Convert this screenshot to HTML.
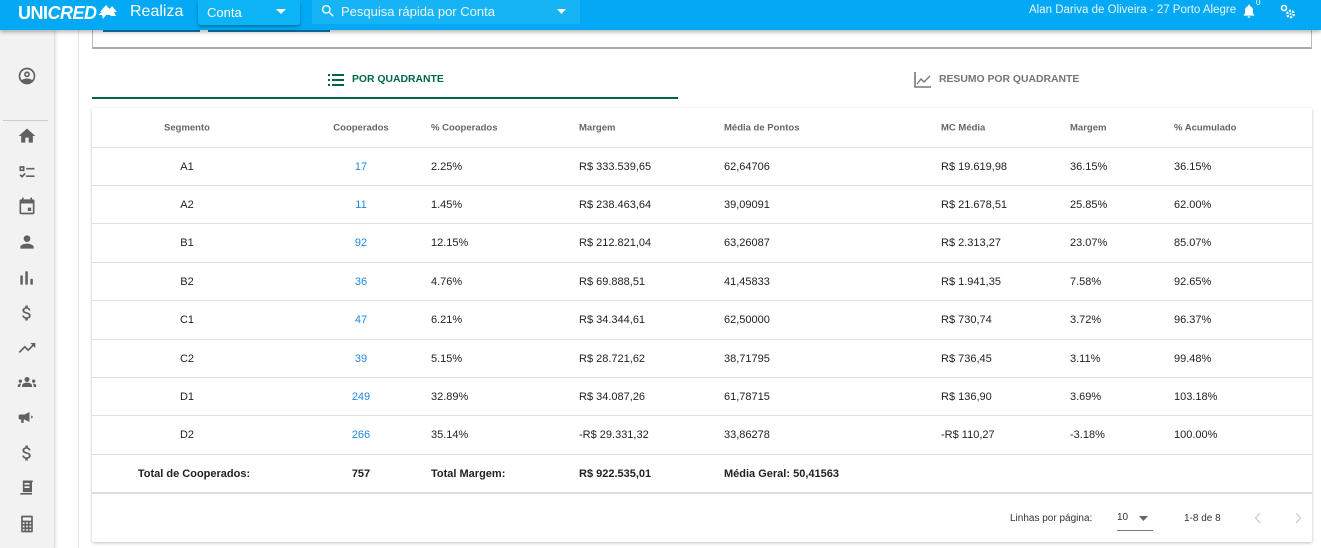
<!DOCTYPE html>
<html><head><meta charset="utf-8"><style>
*{margin:0;padding:0;box-sizing:border-box}
body{width:1321px;height:548px;overflow:hidden;background:#fff;font-family:"Liberation Sans",sans-serif;position:relative;color:#222}
.a{position:absolute}
.hdr{left:0;top:0;width:1321px;height:30px;background:#03a9f4;box-shadow:0 2px 4px rgba(0,0,0,.3);z-index:5}
.side{left:0;top:30px;width:55px;height:518px;background:#f2f2f2;border-right:1px solid #e0e0e0;box-shadow:1px 0 3px rgba(0,0,0,.12)}
.row{position:absolute;left:92px;width:1220px;border-bottom:1px solid #e0e0e0;font-size:11px;color:#222}
.row span{position:absolute;top:50%;transform:translateY(-50%);white-space:nowrap}
.c1{left:45px;width:100px;text-align:center}
.c2{left:229px;width:80px;text-align:center}
.c3{left:339px}.c4{left:487px}.c5{left:632px}.c6{left:849px}.c7{left:978px}.c8{left:1082px}
.h{font-size:9.5px;color:#666;font-weight:bold}
.b{font-weight:bold}
.blue{color:#1e88e5}
.ic{position:absolute;left:17px;width:20px;height:20px;fill:#616161}
</style></head><body>
<div class="a hdr">
 <div class="a" style="left:18px;top:3px;color:#fff;font-size:18px;font-weight:bold;letter-spacing:-0.5px">UNI<i>CRED</i></div>
 <svg class="a" style="left:96px;top:4px" width="22" height="16" viewBox="0 0 22 16"><path d="M4 8L10 1L16 8H12L14 11H10L7 15L6 11H2L6 8Z M11 8L16 2L21 8H18L20 12H15Z" fill="#fff"/></svg>
 <div class="a" style="left:130px;top:3px;color:#fff;font-size:16px">Realiza</div>
 <div class="a" style="left:198px;top:0;width:102px;height:25px;background:#0cb4f6;box-shadow:0 2px 3px rgba(0,0,0,.3);border-radius:0 0 3px 3px"><span class="a" style="left:9px;top:5px;color:#fff;font-size:13px">Conta</span><svg class="a" style="left:78px;top:9px" width="10" height="6"><path d="M0 0H10L5 5Z" fill="#fff"/></svg></div>
 <div class="a" style="left:312px;top:0;width:268px;height:24px;background:#16b4f5">
  <svg class="a" style="left:8px;top:3px" width="16" height="16" viewBox="0 0 24 24"><path d="M15.5 14h-.8l-.3-.3A6.5 6.5 0 1 0 9.5 16a6.5 6.5 0 0 0 4.2-1.6l.3.3v.8l5 5 1.5-1.5-5-5zm-6 0a4.5 4.5 0 1 1 0-9 4.5 4.5 0 0 1 0 9z" fill="#fff"/></svg>
  <span class="a" style="left:29px;top:4px;color:#e8f6fe;font-size:13px">Pesquisa rápida por Conta</span>
  <svg class="a" style="left:245px;top:9px" width="9" height="6"><path d="M0 0H9L4.5 5Z" fill="#fff"/></svg>
 </div>
 <div class="a" style="left:1029px;top:4px;color:#e8f6fe;font-size:11.5px">Alan Dariva de Oliveira - 27 Porto Alegre</div>
 <svg class="a" style="left:1241px;top:2px" width="16" height="18" viewBox="0 0 24 24"><path d="M12 22a2 2 0 0 0 2-2h-4a2 2 0 0 0 2 2zm6-6v-5c0-3-1.6-5.6-4.5-6.3V4a1.5 1.5 0 0 0-3 0v.7C7.6 5.4 6 8 6 11v5l-2 2v1h16v-1z" fill="#fff"/></svg>
 <div class="a" style="left:1256px;top:-2px;color:#fff;font-size:8px">0</div>
 <svg class="a" style="left:1280px;top:4px" width="16" height="16" viewBox="0 0 16 16"><circle cx="4" cy="4" r="2.5" fill="none" stroke="#fff" stroke-width="1.6"/><circle cx="10.5" cy="10" r="3.2" fill="none" stroke="#fff" stroke-width="2.4" stroke-dasharray="2 1.3"/><circle cx="10.5" cy="10" r="1" fill="#fff"/></svg>
</div>
<div class="a side">
 <svg class="ic" style="top:36px" viewBox="0 0 24 24"><path d="M12 2a10 10 0 1 0 0 20 10 10 0 0 0 0-20zm0 2a8 8 0 0 1 6.2 13c-1.5-1.4-3.8-2-6.2-2s-4.7.6-6.2 2A8 8 0 0 1 12 4zm0 2.5a3.5 3.5 0 1 0 0 7 3.5 3.5 0 0 0 0-7zm0 2a1.5 1.5 0 1 1 0 3 1.5 1.5 0 0 1 0-3z"/></svg>
 <div class="a" style="left:3px;top:90px;width:45px;height:1px;background:#ccc"></div>
 <svg class="ic" style="top:96px" viewBox="0 0 24 24"><path d="M10 20v-6h4v6h5v-8h3L12 3 2 12h3v8z"/></svg>
 <svg class="ic" style="top:132px" viewBox="0 0 24 24"><path d="M3 5h6v6H3zm2 2v2h2V7zm6 0h10v2H11zM3 16l1.5-1.5L6 16l3-3 1.5 1.5L6 19zm8 0h10v2H11z"/></svg>
 <svg class="ic" style="top:166px" viewBox="0 0 24 24"><path d="M19 4h-1V2h-2v2H8V2H6v2H5a2 2 0 0 0-2 2v14a2 2 0 0 0 2 2h14a2 2 0 0 0 2-2V6a2 2 0 0 0-2-2zm0 16H5V9h14zm-6-6h4v4h-4z"/></svg>
 <svg class="ic" style="top:202px" viewBox="0 0 24 24"><path d="M12 12a4 4 0 1 0 0-8 4 4 0 0 0 0 8zm0 2c-2.7 0-8 1.3-8 4v2h16v-2c0-2.7-5.3-4-8-4z"/></svg>
 <svg class="ic" style="top:238px" viewBox="0 0 24 24"><path d="M4 9h3v11H4zm6-5h3v16h-3zm6 9h3v7h-3z"/></svg>
 <svg class="ic" style="top:273px" viewBox="0 0 24 24"><path d="M11.8 10.9c-2.3-.6-3-1.2-3-2.1 0-1.1 1-1.9 2.7-1.9 1.8 0 2.4.8 2.5 2.1h2.2c-.1-1.7-1.1-3.3-3.2-3.8V3h-3v2.2C8.1 5.6 6.5 6.8 6.5 8.8c0 2.3 1.9 3.4 4.7 4.1 2.5.6 3 1.5 3 2.4 0 .7-.5 1.8-2.7 1.8-2.1 0-2.9-.9-3-2.1H6.3c.1 2.2 1.8 3.5 3.7 3.9V21h3v-2.2c1.9-.4 3.5-1.5 3.5-3.5 0-2.8-2.4-3.8-4.7-4.4z"/></svg>
 <svg class="ic" style="top:308px" viewBox="0 0 24 24"><path d="M16 6l2.3 2.3-4.9 4.9-4-4L2 16.6 3.4 18l6-6 4 4 6.3-6.3L22 12V6z"/></svg>
 <svg class="ic" style="top:342px" viewBox="0 0 24 24"><path d="M12 12.8c1.6 0 3.1.4 4.3 1 1.1.5 1.7 1.5 1.7 2.7V18H6v-1.5c0-1.2.6-2.2 1.7-2.7 1.2-.6 2.7-1 4.3-1zM4 13a2 2 0 1 0 0-4 2 2 0 0 0 0 4zm-3 5v-1.5C1 15 2.3 14 4 14c.4 0 .7 0 1 .1-.6.8-1 1.7-1 2.4V18zm19-5a2 2 0 1 0 0-4 2 2 0 0 0 0 4zm3 5h-3v-1.5c0-.7-.4-1.6-1-2.4.3-.1.6-.1 1-.1 1.7 0 3 1 3 2.5zM12 6a3 3 0 1 1 0 6 3 3 0 0 1 0-6z"/></svg>
 <svg class="ic" style="top:377px" viewBox="0 0 24 24"><path d="M4 9a2 2 0 0 0-2 2v2a2 2 0 0 0 2 2h1v4h3v-4h1l6 3V6L9 9zm13 1v4c1-.5 2-1.2 2-2s-1-1.5-2-2z"/></svg>
 <svg class="ic" style="top:413px" viewBox="0 0 24 24"><path d="M11.8 10.9c-2.3-.6-3-1.2-3-2.1 0-1.1 1-1.9 2.7-1.9 1.8 0 2.4.8 2.5 2.1h2.2c-.1-1.7-1.1-3.3-3.2-3.8V3h-3v2.2C8.1 5.6 6.5 6.8 6.5 8.8c0 2.3 1.9 3.4 4.7 4.1 2.5.6 3 1.5 3 2.4 0 .7-.5 1.8-2.7 1.8-2.1 0-2.9-.9-3-2.1H6.3c.1 2.2 1.8 3.5 3.7 3.9V21h3v-2.2c1.9-.4 3.5-1.5 3.5-3.5 0-2.8-2.4-3.8-4.7-4.4z"/></svg>
 <svg class="ic" style="top:448px" viewBox="0 0 24 24"><path d="M7 3h12v2h-1v12H7zm2 3v2h6V6zm0 4v2h6v-2zM4 18h14v2H4z"/></svg>
 <svg class="ic" style="top:484px" viewBox="0 0 24 24"><path d="M6 2h12a1 1 0 0 1 1 1v18a1 1 0 0 1-1 1H6a1 1 0 0 1-1-1V3a1 1 0 0 1 1-1zm1 2v4h10V4zm0 6v2h2v-2zm4 0v2h2v-2zm4 0v2h2v-2zM7 14v2h2v-2zm4 0v2h2v-2zm4 0v2h2v-2zM7 18v2h2v-2zm4 0v2h2v-2zm4 0v2h2v-2z"/></svg>
</div>
<div class="a" style="left:78px;top:30px;width:1px;height:518px;background:#e6e6e6"></div>
<div class="a" style="left:103px;top:30px;width:97px;height:2px;background:#0a7fb5"></div>
<div class="a" style="left:208px;top:30px;width:122px;height:2px;background:#0a7fb5"></div>
<div class="a" style="left:92px;top:30px;width:1220px;height:19px;border:1px solid #bbb;border-top:none;border-bottom:2px solid #aaa"></div>
<svg class="a" style="left:328px;top:73px" width="16" height="14" viewBox="0 0 16 14"><g fill="#00664a"><rect x="0" y="1" width="2" height="2"/><rect x="0" y="6" width="2" height="2"/><rect x="0" y="11" width="2" height="2"/><rect x="4" y="1" width="12" height="2"/><rect x="4" y="6" width="12" height="2"/><rect x="4" y="11" width="12" height="2"/></g></svg>
<div class="a" style="left:352px;top:74px;font-size:10.4px;font-weight:bold;color:#00664a">POR QUADRANTE</div>
<div class="a" style="left:92px;top:97px;width:586px;height:2px;background:#00664a"></div>
<svg class="a" style="left:914px;top:72px" width="18" height="16" viewBox="0 0 18 16"><path d="M1 0V15H17" fill="none" stroke="#777" stroke-width="1.6"/><path d="M3 12L7 7L10 10L16 4" fill="none" stroke="#777" stroke-width="1.4"/></svg>
<div class="a" style="left:939px;top:74px;font-size:10.4px;font-weight:bold;color:#757575">RESUMO POR QUADRANTE</div>
<div class="a" style="left:92px;top:108px;width:1220px;height:434px;box-shadow:0 1px 3px rgba(0,0,0,.25);border-radius:2px"></div>
<div class="row" style="top:108px;height:40px"><span class="c1 h">Segmento</span><span class="c2 h">Cooperados</span><span class="c3 h">% Cooperados</span><span class="c4 h">Margem</span><span class="c5 h">Média de Pontos</span><span class="c6 h">MC Média</span><span class="c7 h">Margem</span><span class="c8 h">% Acumulado</span></div>
<div class="row" style="top:148px;height:38px"><span class="c1">A1</span><span class="c2 blue">17</span><span class="c3">2.25%</span><span class="c4">R$ 333.539,65</span><span class="c5">62,64706</span><span class="c6">R$ 19.619,98</span><span class="c7">36.15%</span><span class="c8">36.15%</span></div>
<div class="row" style="top:186px;height:38px"><span class="c1">A2</span><span class="c2 blue">11</span><span class="c3">1.45%</span><span class="c4">R$ 238.463,64</span><span class="c5">39,09091</span><span class="c6">R$ 21.678,51</span><span class="c7">25.85%</span><span class="c8">62.00%</span></div>
<div class="row" style="top:224px;height:39px"><span class="c1">B1</span><span class="c2 blue">92</span><span class="c3">12.15%</span><span class="c4">R$ 212.821,04</span><span class="c5">63,26087</span><span class="c6">R$ 2.313,27</span><span class="c7">23.07%</span><span class="c8">85.07%</span></div>
<div class="row" style="top:263px;height:38px"><span class="c1">B2</span><span class="c2 blue">36</span><span class="c3">4.76%</span><span class="c4">R$ 69.888,51</span><span class="c5">41,45833</span><span class="c6">R$ 1.941,35</span><span class="c7">7.58%</span><span class="c8">92.65%</span></div>
<div class="row" style="top:301px;height:39px"><span class="c1">C1</span><span class="c2 blue">47</span><span class="c3">6.21%</span><span class="c4">R$ 34.344,61</span><span class="c5">62,50000</span><span class="c6">R$ 730,74</span><span class="c7">3.72%</span><span class="c8">96.37%</span></div>
<div class="row" style="top:340px;height:38px"><span class="c1">C2</span><span class="c2 blue">39</span><span class="c3">5.15%</span><span class="c4">R$ 28.721,62</span><span class="c5">38,71795</span><span class="c6">R$ 736,45</span><span class="c7">3.11%</span><span class="c8">99.48%</span></div>
<div class="row" style="top:378px;height:38px"><span class="c1">D1</span><span class="c2 blue">249</span><span class="c3">32.89%</span><span class="c4">R$ 34.087,26</span><span class="c5">61,78715</span><span class="c6">R$ 136,90</span><span class="c7">3.69%</span><span class="c8">103.18%</span></div>
<div class="row" style="top:416px;height:39px"><span class="c1">D2</span><span class="c2 blue">266</span><span class="c3">35.14%</span><span class="c4">-R$ 29.331,32</span><span class="c5">33,86278</span><span class="c6">-R$ 110,27</span><span class="c7">-3.18%</span><span class="c8">100.00%</span></div>
<div class="row b" style="top:455px;height:39px;border-bottom:2px solid #ddd"><span class="c1 b" style="left:25px;width:154px">Total de Cooperados:</span><span class="c2 b">757</span><span class="c3 b">Total Margem:</span><span class="c4 b">R$ 922.535,01</span><span class="c5 b">Média Geral: 50,41563</span></div>
<div class="a" style="left:1010px;top:513px;font-size:10px;color:#333">Linhas por página:</div>
<div class="a" style="left:1117px;top:512px;font-size:10px;color:#333">10</div>
<svg class="a" style="left:1139px;top:516px" width="9" height="5"><path d="M0 0H9L4.5 5Z" fill="#666"/></svg>
<div class="a" style="left:1117px;top:530px;width:36px;height:1px;background:#777"></div>
<div class="a" style="left:1184px;top:513px;font-size:10px;color:#333">1-8 de 8</div>
<svg class="a" style="left:1254px;top:512px" width="8" height="12"><path d="M6 1L1.5 6L6 11" fill="none" stroke="#ccc" stroke-width="1.3"/></svg>
<svg class="a" style="left:1294px;top:512px" width="8" height="12"><path d="M2 1L6.5 6L2 11" fill="none" stroke="#ccc" stroke-width="1.3"/></svg>
</body></html>
